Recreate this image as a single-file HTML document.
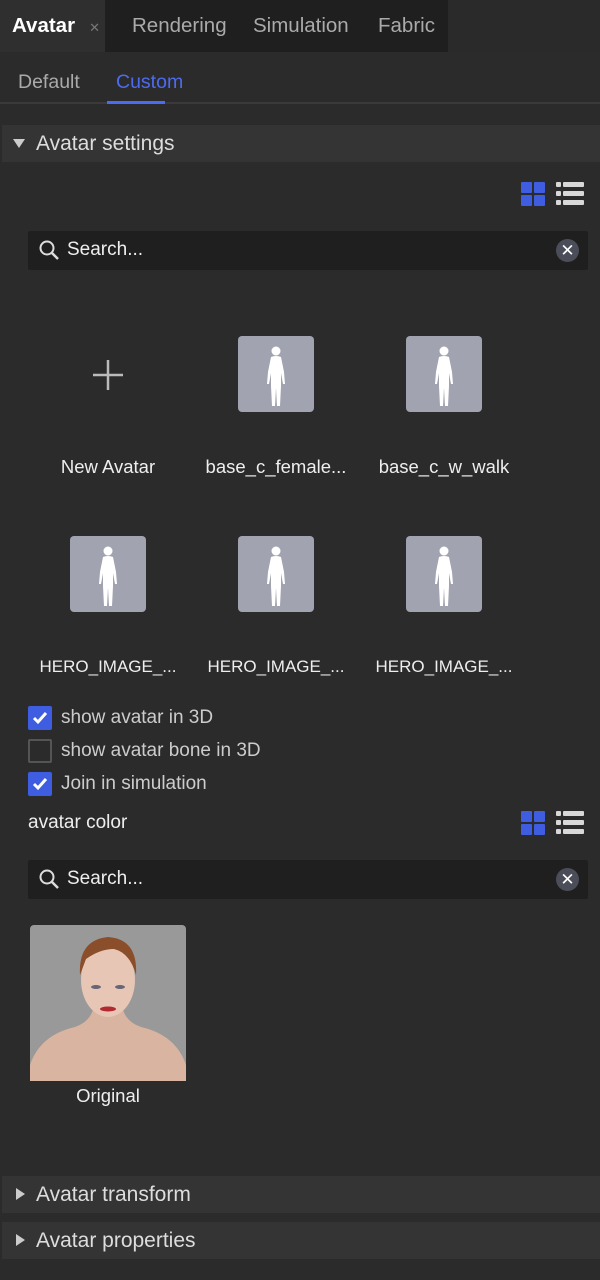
<!DOCTYPE html>
<html><head><style>
*{margin:0;padding:0;box-sizing:border-box}
body{width:600px;height:1280px;background:#2b2b2b;font-family:"Liberation Sans",sans-serif;color:#ddd;position:relative;overflow:hidden}
.a{position:absolute}
.tab{position:absolute;top:0;height:52px;line-height:52px;font-size:20.5px;color:#aaa}
.hdr{position:absolute;left:2px;right:0;height:37px;background:#343434;font-size:21px;line-height:37px;color:#ddd;padding-left:34px}
.tri{position:absolute;left:12px;top:13px;width:0;height:0}
.search{position:absolute;left:28px;width:560px;height:39px;background:#1f1f1f;border-radius:2px}
.search span{position:absolute;left:39px;top:8px;font-size:19px;color:#eee}
.clr{position:absolute;right:9px;top:8px;width:23px;height:23px;border-radius:50%;background:#4b4e59;color:#fff;text-align:center;line-height:23px;font-size:17px}
.th{position:absolute;width:76px;height:76px;background:#a1a4b0;border-radius:4px}
.lbl{position:absolute;width:168px;text-align:center;font-size:18.5px;color:#eee;white-space:nowrap}
.hero{font-size:17px;top:657px}
.cb{position:absolute;left:28px;width:24px;height:24px;border-radius:2px}
.on{background:#3e5de0}
.off{border:2px solid #555;background:#2b2b2b}
.cbt{position:absolute;left:61px;font-size:19px;color:#ccc}
</style></head><body>
<div class="a" style="left:0;top:0;width:600px;height:52px;background:#2a2a2a"></div>
<div class="a" style="left:105px;top:0;width:343px;height:52px;background:#1f1f1f"></div>
<div class="tab" style="left:0;width:105px;background:#2f2f2f;padding-left:12px;color:#fff;font-weight:bold">Avatar<span style="font-weight:normal;font-size:13px;color:#777;margin-left:14px">✕</span></div>
<div class="tab" style="left:132px">Rendering</div>
<div class="tab" style="left:253px">Simulation</div>
<div class="tab" style="left:378px">Fabric</div>

<div class="a" style="left:18px;top:71px;font-size:19.5px;color:#aaa">Default</div>
<div class="a" style="left:116px;top:71px;font-size:19.5px;color:#4d6bf0">Custom</div>
<div class="a" style="left:0;top:102px;width:600px;height:2px;background:#3a3a3a"></div>
<div class="a" style="left:107px;top:101px;width:58px;height:3px;background:#4d6bf0"></div>

<div class="hdr" style="top:125px"><div class="tri" style="border-left:6px solid transparent;border-right:6px solid transparent;border-top:9px solid #ccc;left:11px;top:14px"></div>Avatar settings</div>

<svg class="a" style="left:521px;top:182px" width="64" height="24">
<rect x="0" y="0" width="11" height="11" rx="1" fill="#3e5de0"/><rect x="13" y="0" width="11" height="11" rx="1" fill="#3e5de0"/>
<rect x="0" y="13" width="11" height="11" rx="1" fill="#3e5de0"/><rect x="13" y="13" width="11" height="11" rx="1" fill="#3e5de0"/>
<g fill="#d8d8d8"><rect x="35" y="0" width="5" height="5" rx="1"/><rect x="35" y="9" width="5" height="5" rx="1"/><rect x="35" y="18" width="5" height="5" rx="1"/>
<rect x="42" y="0" width="21" height="5" rx="1"/><rect x="42" y="9" width="21" height="5" rx="1"/><rect x="42" y="18" width="21" height="5" rx="1"/></g></svg>

<div class="search" style="top:231px"><svg class="a" style="left:11px;top:9px" width="22" height="22"><circle cx="8" cy="8" r="6.5" stroke="#ddd" stroke-width="2" fill="none"/><line x1="13" y1="13" x2="19" y2="19" stroke="#ddd" stroke-width="2.5"/></svg><span>Search...</span><div class="clr">✕</div></div>

<svg class="a" style="left:92px;top:359px" width="32" height="32"><line x1="1" y1="16" x2="31" y2="16" stroke="#bbb" stroke-width="2.5"/><line x1="16" y1="1" x2="16" y2="31" stroke="#bbb" stroke-width="2.5"/></svg>

<svg width="0" height="0" style="position:absolute"><defs><g id="fig" fill="#fff"><circle cx="38" cy="15" r="4.5"/><path d="M33 21 Q38 19 43 21 L46 36 L47 48 L45 48 L43 37 L43 50 L42 70 L39 70 L38 52 L37 70 L34 70 L33 50 L33 37 L31 48 L29 48 L30 36 Z"/></g></defs></svg>
<div class="th" style="left:238px;top:336px"><svg width="76" height="76"><use href="#fig"/></svg></div>
<div class="th" style="left:406px;top:336px"><svg width="76" height="76"><use href="#fig"/></svg></div>
<div class="th" style="left:70px;top:536px"><svg width="76" height="76"><use href="#fig"/></svg></div>
<div class="th" style="left:238px;top:536px"><svg width="76" height="76"><use href="#fig"/></svg></div>
<div class="th" style="left:406px;top:536px"><svg width="76" height="76"><use href="#fig"/></svg></div>

<div class="lbl" style="left:24px;top:456px">New Avatar</div>
<div class="lbl" style="left:192px;top:456px">base_c_female...</div>
<div class="lbl" style="left:360px;top:456px">base_c_w_walk</div>
<div class="lbl hero" style="left:24px">HERO_IMAGE_...</div>
<div class="lbl hero" style="left:192px">HERO_IMAGE_...</div>
<div class="lbl hero" style="left:360px">HERO_IMAGE_...</div>

<div class="cb on" style="top:706px"><svg width="24" height="24"><path d="M6 12 L10 16 L18 7" stroke="#fff" stroke-width="3" fill="none"/></svg></div>
<div class="cbt" style="top:707px">show avatar in 3D</div>
<div class="cb off" style="top:739px"></div>
<div class="cbt" style="top:740px">show avatar bone in 3D</div>
<div class="cb on" style="top:772px"><svg width="24" height="24"><path d="M6 12 L10 16 L18 7" stroke="#fff" stroke-width="3" fill="none"/></svg></div>
<div class="cbt" style="top:773px">Join in simulation</div>

<div class="a" style="left:28px;top:812px;font-size:19px;color:#eee">avatar color</div>
<svg class="a" style="left:521px;top:811px" width="64" height="24">
<rect x="0" y="0" width="11" height="11" rx="1" fill="#3e5de0"/><rect x="13" y="0" width="11" height="11" rx="1" fill="#3e5de0"/>
<rect x="0" y="13" width="11" height="11" rx="1" fill="#3e5de0"/><rect x="13" y="13" width="11" height="11" rx="1" fill="#3e5de0"/>
<g fill="#d8d8d8"><rect x="35" y="0" width="5" height="5" rx="1"/><rect x="35" y="9" width="5" height="5" rx="1"/><rect x="35" y="18" width="5" height="5" rx="1"/>
<rect x="42" y="0" width="21" height="5" rx="1"/><rect x="42" y="9" width="21" height="5" rx="1"/><rect x="42" y="18" width="21" height="5" rx="1"/></g></svg>

<div class="search" style="top:860px"><svg class="a" style="left:11px;top:9px" width="22" height="22"><circle cx="8" cy="8" r="6.5" stroke="#ddd" stroke-width="2" fill="none"/><line x1="13" y1="13" x2="19" y2="19" stroke="#ddd" stroke-width="2.5"/></svg><span>Search...</span><div class="clr">✕</div></div>

<svg class="a" style="left:30px;top:925px" width="156" height="156">
<rect width="156" height="156" rx="4" fill="#999"/>
<path d="M0 156 L0 140 Q10 110 45 102 Q62 96 64 80 L92 80 Q94 96 111 102 Q146 110 156 140 L156 156 Z" fill="#d9b4a0"/>
<ellipse cx="78" cy="55" rx="27" ry="37" fill="#e8c6b6"/>
<path d="M50 50 Q48 15 78 12 Q108 14 106 50 Q100 28 84 24 Q70 24 56 34 Z" fill="#8a4e2a"/>
<ellipse cx="78" cy="84" rx="8" ry="2.5" fill="#b02a30"/>
<ellipse cx="66" cy="62" rx="5" ry="2" fill="#667"/><ellipse cx="90" cy="62" rx="5" ry="2" fill="#667"/>
</svg>
<div class="a" style="left:30px;top:1085px;width:156px;text-align:center;font-size:18.5px;color:#eee">Original</div>

<div class="hdr" style="top:1176px"><div class="tri" style="border-top:6px solid transparent;border-bottom:6px solid transparent;border-left:9px solid #ccc;left:14px;top:12px"></div>Avatar transform</div>
<div class="hdr" style="top:1222px"><div class="tri" style="border-top:6px solid transparent;border-bottom:6px solid transparent;border-left:9px solid #ccc;left:14px;top:12px"></div>Avatar properties</div>
</body></html>
